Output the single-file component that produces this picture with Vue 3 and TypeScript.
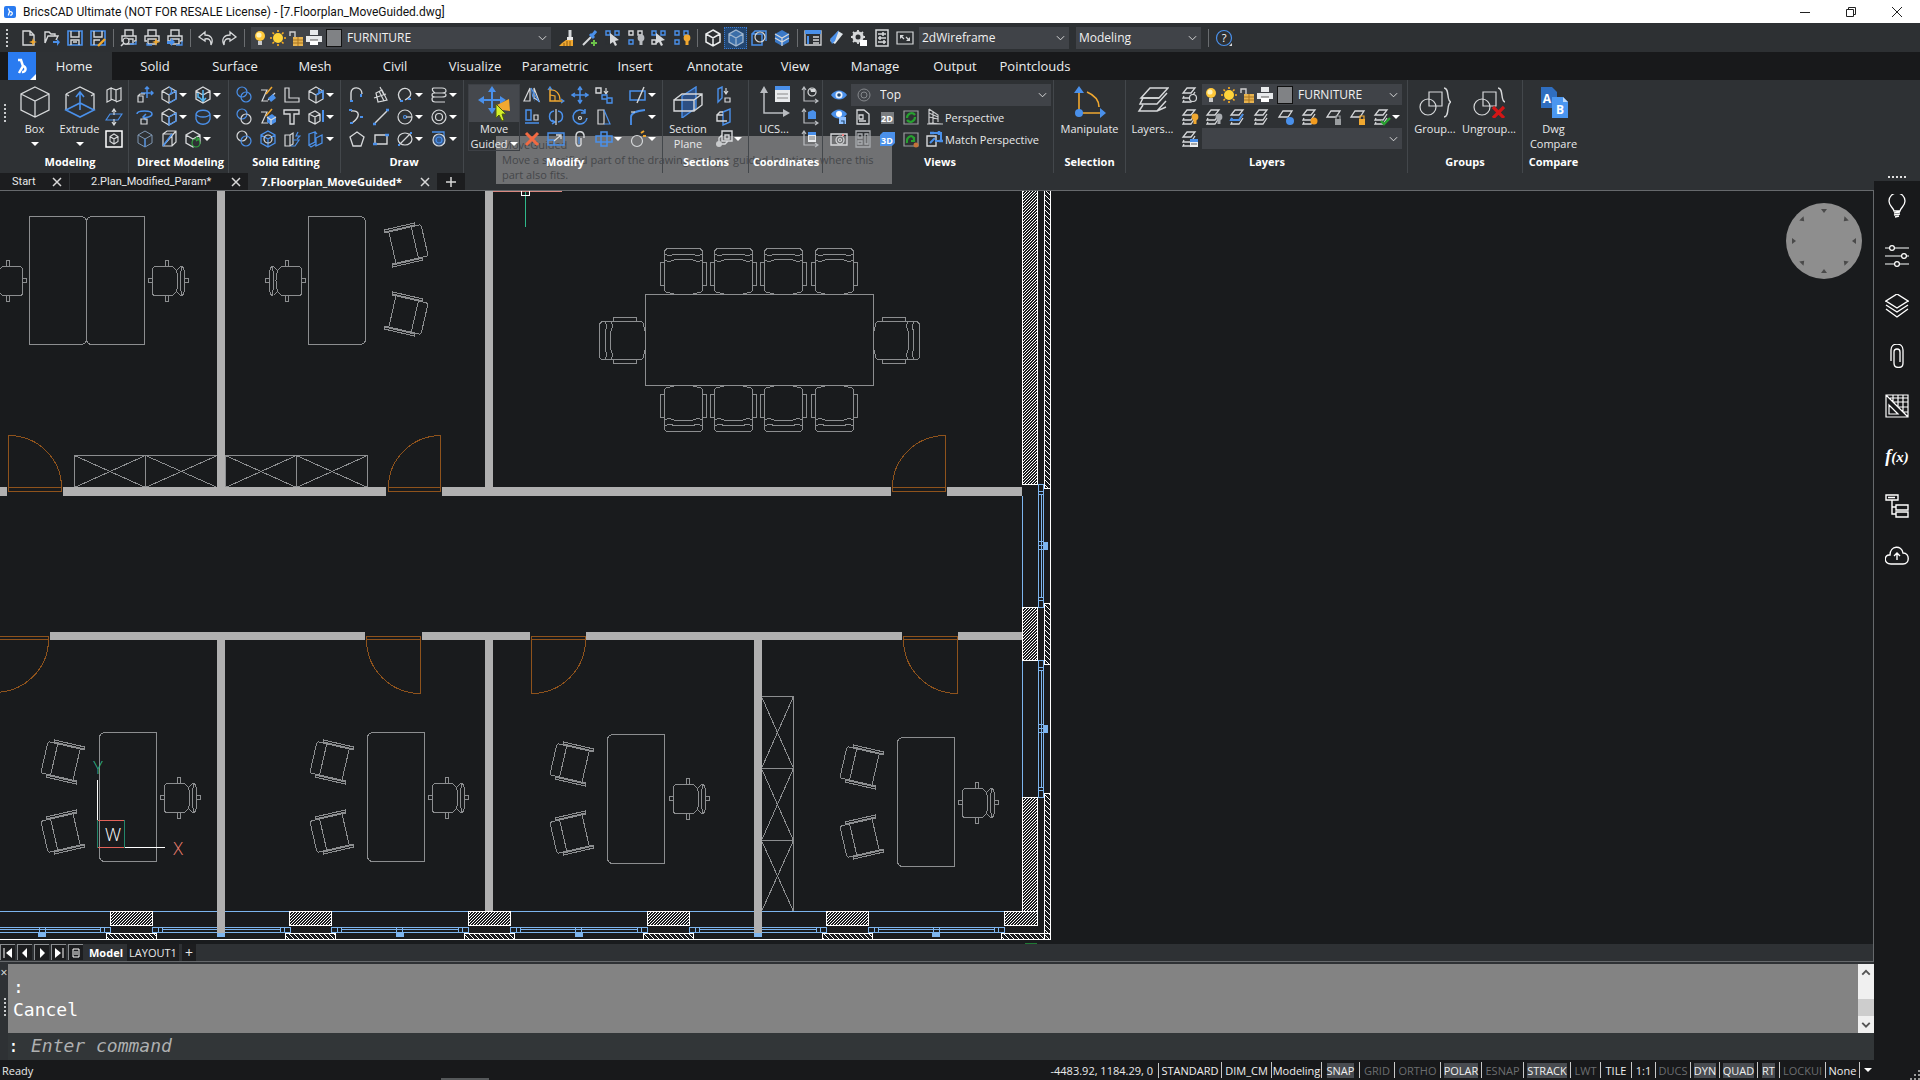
<script setup lang="ts">
import { ref } from 'vue'

interface Tool { icon: string; label: string; arrow?: boolean; wide?: boolean }

const W = '#d6d8da'
const B = '#4a90ea'
const O = '#f0a830'
const G = '#2fa03c'

const s = (d: string, c = W, w = 1.2) => `<path d="${d}" fill="none" stroke="${c}" stroke-width="${w}"/>`
const f = (d: string, c = W) => `<path d="${d}" fill="${c}"/>`
const o = (x: number, y: number, r: number, c = W, fill = 'none') =>
  `<circle cx="${x}" cy="${y}" r="${r}" fill="${fill}" stroke="${c}" stroke-width="1.2"/>`
const t = (x: number, y: number, size: number, text: string) =>
  `<text x="${x}" y="${y}" font-size="${size}" font-weight="700" font-family="Open Sans, sans-serif" fill="#fff" text-anchor="middle">${text}</text>`

const cube = 'M9 1L16 5V13L9 17L2 13V5ZM2 5L9 9L16 5M9 9V17'
const arrows4 = 'M9 2V16M2 9H16M7 4L9 1L11 4M7 14L9 17L11 14M4 7L1 9L4 11M14 7L17 9L14 11'
const stack = s('M6 2H14L10 7H2ZM3 10L2 12H10L14 6M3 14L2 16H10L14 10', W, 1.3)
const sheet = s('M6 3H15L11 9H2Z', W, 1.3)
const bulbAt = (c: string) => `<circle cx="14" cy="9" r="3.4" fill="${c}"/>` + f('M12.5 12H15.5V16H12.5Z', c)
const printer = s('M5 7V1H13V7M4 12H2V7H16V12H14M5 10H13V15H5Z', W, 1.4)
const axes = s('M3 2V15H16M1 4L3 1L5 4M14 13L17 15L14 17', '#b9bcc0', 1.2)
const squares = (c1: string, c2: string) => s('M2 2H6V6H2ZM11 2H15V6H11Z', c1, 1.4) + s('M2 11H6V15H2Z', c2, 1.4)
const pointer = f('M6 4L15 11L11 12L13 16L11 17L9 13L6 15Z')
const lockBody = (c: string) => f('M10 11H16V17H10Z', c) + s('M11 11V8H15V11', c)

const icons: Record<string, string> = {
  newFile: s('M3 2H10L14 6V16H3ZM10 2V6H14', W, 1.4) + f('M13 9L14 12L17 13L14 14L13 17L12 14L9 13L12 12Z', O),
  open: s('M2 14V3H6L8 5H12V7M2 14L5 7H15L13 11', W, 1.4) + f('M10 12H14V10L17 13L14 17V14H10Z', B),
  save: s('M2 2H16V16H2Z', B, 1.6) + s('M5 2V8H13V2M5 16V11H13V16M7 13H11', W, 1.4),
  saveAs: s('M2 2H16V16H2Z', B, 1.6) + s('M5 2V8H13V2M5 16V11H11', W, 1.4) + s('M9 17L16 10', O, 2.4),
  preview: printer + o(6, 12, 3, W, '#2d3033') + s('M4 14L1 17', W, 1.6) + s('M10 15H16V12', B, 1.3),
  print: printer + s('M4 14V16H9', B, 1.3) + f('M13 9L14 12L17 13L14 14L13 17L12 14L9 13L12 12Z', O),
  publish: printer + s('M10 16H16V12', B, 1.3) + f('M1 12H5V9L9 13L5 17V15H1Z', B),
  undo: s('M8 3L2 8L8 12V10C12 9 14 11 14 16C17 10 14 6 8 6Z', W, 1.3),
  redo: s('M10 3L16 8L10 12V10C6 9 4 11 4 16C1 10 4 6 10 6Z', W, 1.3),
  bulb: '<circle cx="9" cy="7" r="5" fill="#ffc83a"/><circle cx="8" cy="6" r="2.6" fill="#fff3b8"/>' + f('M7 12H11V16H7Z', '#c9c9c9'),
  sun: '<circle cx="9" cy="9" r="5" fill="#ffd43a"/>' + s('M9 1V3M9 15V17M1 9H3M15 9H17M3.500 3.500L5 5M13 13L14.500 14.500M3.500 14.500L5 13M13 5L14.500 3.500', '#ffb020', 1.6),
  unlock: f('M6 8H16V17H6Z', '#e8b450') + s('M8 8V3H3V7', '#cfcfcf', 1.4) + s('M6 11H16M6 14H16M11 8V17', '#a87420', 1),
  plot: f('M5 1H13V6H5ZM1 7H17V13H1Z', '#e8eaec') + f('M5 11H13V16H5Z', '#fff') + s('M5 11H13', '#555', 1),
  brush: s('M12 1V8', W, 3) + f('M9 8H15V11H9Z', '#e9e9e9') + f('M8 11H15V17H1L4 14Z', O) + s('M6 14V17M9 12V17M12 12V17', '#8a5a10', 1),
  dropper: s('M2 16L10 8', W, 2) + s('M9 5L13 9M10 8L15 2', B, 3) + s('M13 11V17M10 14H16', '#6cc24a', 2),
  selA: squares(B, '#2d3033') + pointer,
  selB: squares(W, B) + bulbAt('#b9bcc0'),
  selC: squares(B, W) + pointer,
  selD: squares(B, B) + bulbAt(O),
  cube: s(cube, '#eceeef', 1.5),
  cubeB: f('M9 1L16 5V13L9 17L2 13V5Z', '#3b6ea8') + s(cube, '#9fb6cf', 1.3),
  shapeO: s('M2 5H12V16H2ZM2 5L5 2H16V12', B, 1.5) + o(10, 8, 5),
  cubeC: f('M9 1L16 5V13L9 17L2 13V5Z', '#3a79c8') + s('M2 5L9 9L16 5M9 9V17M2 9L9 13L16 9', W, 1.2),
  props: s('M1 2H17V16H1Z', W, 1.3) + f('M1 1H17V5H1Z', B) + s('M4 7V15', B, 2) + s('M9 8H15M9 11H15M9 14H15', W, 1.4),
  eraser: f('M11 2L16 5L8 15L3 12Z', '#dfe5ea') + f('M3 10L12 1L8 12L5 15Z', B),
  gear: '<circle cx="8" cy="8" r="4.200" fill="none" stroke="#d6d8da" stroke-width="3"/>' + s('M8 1V15M1 8H15M3 3L13 13M3 13L13 3', W, 1.8) + '<circle cx="8" cy="8" r="2.500" fill="#2b2e31"/>' + f('M10 11H17V17H10Z', '#fff'),
  sliders: s('M3 1H15V17H3ZM5 5H13M5 9H13M5 13H13M10 3V7M7 7V11M11 11V15', W, 1.5),
  full: s('M1 3H17V15H1Z', W, 1.2) + f('M4 6H8L4 10ZM14 12H10L14 8Z') + s('M5 7L8 10M10 8L13 11'),
  help: o(9, 9, 7.5, B) + '<text x="9" y="13" font-size="11" font-family="Open Sans, sans-serif" fill="#fff" text-anchor="middle">?</text>' + f('M14 17H17V14Z'),
  polysolid: s('M2 4L6 2V14L2 16ZM6 2L11 4V15L6 13M11 4L16 2V14L11 16'),
  press: s('M1 12L5 6H17L13 12Z', B) + s('M9 2V7M9 11V16M7 4L9 1L11 4M7 14L9 17L11 14'),
  frame: s('M1 1H17V17H1Z', '#fff', 1.5) + s('M9 4L13 6.500V11.500L9 14L5 11.500V6.500ZM5 6.500L9 9L13 6.500M9 9V14', W, 1.1),
  dmMove: s('M11 1V12M5 7H17M9 3L11 1L13 3M15 5L17 7L15 9', B, 1.5) + s('M2 10H7V16H2ZM2 10L4 8H9'),
  dmEdge: s(cube) + s('M9 9L16 5V13L9 17M9 1C13 3 12 7 9 9', B, 1.3),
  dmFace: s(cube, W, 1.3) + s('M9 4V14M6 12L9 15L12 12M4 7V11L6 12', '#53b4ee', 1.6),
  dmRot: s('M1 6C1 2 16 2 16 6C16 9 10 10 7 9M10 6L7 9L10 12', B, 1.5) + s('M5 11H11V16H5Z'),
  dmFill: s(cube) + s('M9 9L16 5V13L9 17Z', B, 1.3),
  dmCyl: s('M2 6C4 1 14 1 16 6V11C14 18 4 18 2 11ZM2 6C4 10 14 10 16 6', B, 1.3),
  dmCube: s(cube, '#7f97b2', 1) + s('M9 9V17', B),
  dmSlice: s('M3 4L7 1H16V12L12 16H3ZM3 16L16 1M3 4H12V16') + s('M3 16L12 4', B, 1.5),
  dmSync: s(cube, W, 1.3) + o(12, 13, 4, G, '#2e3134') + s('M12 7L15 9L12 11', G, 1.5),
  seUnion: o(7, 6, 5, B) + o(11, 11, 5, B),
  seSub: o(7, 6, 5, B) + o(11, 11, 5),
  seInt: o(7, 6, 5) + o(11, 11, 5, B),
  seExt: s('M2 4H8L3 15H9M9 14L16 7') + f('M9 12L14 8L17 12L12 16Z', B) + s('M7 8L13 1', O, 1.5),
  seImp: s('M2 4H8L3 15H9') + f('M8 9L13 6L17 9V14L12 17L8 14Z', B) + s('M7 8L13 1', O, 1.5) + s('M8 9L12 12L17 9M12 12V17'),
  seSolid: s(cube, B, 1.3) + o(9, 9, 4),
  seL: s('M2 2H6V12H16V16H2Z'),
  seT: s('M1 2H16V6H11V16H7V6H1Z', W, 1.4),
  seCopy: s('M2 5H7V16H2ZM7 5L10 3V14L7 16') + s('M10 10H16L12 16H8M15 2L13 6H17L14 9', B),
  seA: s(cube) + s('M9 9L16 5V13M12 3V8', B, 1.6),
  seB: s('M2 6L8 3L13 6V13L8 16L2 13ZM2 6L8 9L13 6M8 9V16', W, 1.3) + s('M16 2V14', B, 2),
  seC: s('M2 4L8 2V12L2 15ZM9 8L15 5V13L9 16ZM8 2L10 4M2 15L4 17L9 14', B, 1.3),
  dPoly: s('M3 16V7C3 0 14 0 14 8', W, 1.4) + s('M2 15H5M13 8V11', B, 2),
  dArc: s('M3 3C13 2 12 9 4 15', W, 1.4) + s('M1 2H4M12 9H15M2 15H5', B, 2),
  dPent: s('M9 2L16 7L13 16H5L2 7Z', W, 1.3),
  dHatch: s('M4 7L10 4L15 14L6 16ZM2 12L14 8M7 5L12 15M8 1L12 9', W, 1.2),
  dLine: s('M3 15L15 3', W, 1.4) + s('M1 16H4M14 2H17', B, 2.5),
  dRect: s('M3 5H15V14H3Z', W, 1.4) + s('M1 14H5M13 5H17', B, 2.5),
  dArc2: s('M5 15C-2 6 8 -1 13 4C17 9 13 12 9 14', W, 1.3) + s('M4 15H7M12 13H15', B, 2),
  dCirc: o(9, 9, 7) + o(9, 9, 1.5, B) + s('M10 9H16', W),
  dEll: `<ellipse cx="9" cy="9" rx="7" ry="6" fill="none" stroke="${W}" stroke-width="1.2"/>` + s('M3 15L15 3', W) + s('M2 15H4M14 3H16', B, 2),
  dHelix: s('M3 2H12Q16 2 16 5Q16 7 12 7H5Q2 7 2 9Q2 11 5 11H13M5 7H12Q16 7 16 9Q16 11 12 11H5Q2 11 2 13Q2 16 5 16H15M3 2Q1 4 5 7', W, 1.2),
  dDonut: o(9, 9, 7) + o(9, 9, 3.5),
  dRegion: s('M2 2H14V14', B, 1.3) + o(9, 10, 6, W, '#35588a') + o(9, 10, 3, B),
  mMirror: s('M7 2L1 15H7ZM11 2L16 15L11 12Z') + f('M8 2L12 16L9 10Z', B) + s('M8 2L16 16', B, 1.4),
  mRot: s('M3 2V15H16', O, 1.5) + s('M3 4C9 3 13 8 13 14M3 9L8 10V15', O, 1.2) + s('M1 4L3 1L5 4M14 13L17 15L14 17', B, 1.3),
  mMove: s(arrows4, B, 1.5),
  mCopy: s('M1 2H6V7H1Z', W, 1.4) + s('M11 2V7M9 5L11 8L13 5') + s('M7 9H12V13H7ZM12 12H17V17H12Z', B, 1.4),
  mTrim: s('M1 5H16V14H1Z', B, 1.5) + s('M8 17L15 1', W, 1.4),
  mAlign: s('M3 2H8V12H3ZM2 15H16', B, 1.5) + s('M11 7H15V12H11Z'),
  mFlip: s('M7 3C1 4 1 13 7 14M11 3C17 4 17 13 11 14M5 12L8 14L5 16', B, 1.5) + s('M9 1V17'),
  mTurn: s('M14 4A7 7 0 1 0 16 10M14 1V5H10', B, 1.5) + o(9, 10, 1.5, W),
  mTaper: s('M3 2H9V16H3Z') + s('M9 2L15 16H9', B, 1.2),
  mFillet: s('M2 17V9C2 5 6 3 16 2', B, 1.8) + s('M2 4H6', W, 1.2),
  mErase: s('M3 3L15 15M15 3L3 15', '#f26a42', 3),
  mScale: s('M1 3H17V15H1ZM1 10H7V15', B, 1.4) + s('M7 11L13 6M9 5H14V9', W, 1.3),
  mOffset: s('M13 8V5C12 0 5 1 5 6V13C6 18 11 16 10 13V8', W, 1.4) + s('M8 14V7', B),
  mStretch: s('M6 2H12V6H17V12H12V16H6V12H1V6H6ZM6 6H12V12H6Z', B, 1.5),
  mExplode: o(8, 11, 5.5) + s('M12 3L15 1M14 6L17 6', O, 2),
  secA: s('M3 3L7 1V12L3 16Z', B, 1.4) + s('M11 2V7M9 5L11 8L13 5') + s('M10 12H15V16H10Z'),
  secB: s('M8 4L15 1V14L8 17Z', B, 1.4) + s('M8 7H2V13H12M2 7L5 4H8', W, 1.4),
  secC: s('M7 1H17V11H7ZM10 5H14V9H10ZM7 5L4 8V14H10L13 11', W, 1.4) + '<circle cx="4" cy="14" r="3" fill="#c8cacc"/>',
  csA: axes + o(11, 6, 4) + f('M9 3H14V6H10Z'),
  csB: axes + f('M7 4L12 2L15 4V11H7Z', B),
  csC: axes + f('M7 3H15V12H7Z', '#e8eaec') + f('M7 2H15V5H7Z', B) + s('M8 7H14M8 9H14', '#777', 1),
  eye: f('M1 9C5 3 13 3 17 9C13 15 5 15 1 9Z', B) + '<circle cx="9" cy="9" r="3.500" fill="#eaf3ff"/><circle cx="9" cy="9" r="1.800" fill="#24486f"/>',
  eyeSave: f('M1 6C5 0 13 0 17 6C13 12 5 12 1 6Z', B) + '<circle cx="9" cy="6" r="3" fill="#fff"/>' + f('M9 9H16V16H9Z', '#8fc0ff') + s('M11 13H14V16', '#24486f'),
  camera: s('M1 4H17V15H1Z', W, 1.4) + o(10, 10, 4) + o(10, 10, 1.5) + s('M13 4V6', '#e88', 2),
  page: s('M3 2H10L15 6V16H3ZM5 7H9V11H5ZM5 13H12', W, 1.3),
  vports: s('M2 1H16V17H2ZM4 4H8V8H4ZM11 4H14V14H11ZM4 11H8V14H4Z', '#a9acb0', 1.3),
  v2d: f('M3 4H16V16H3Z', '#7a7d80') + t(9, 14, 9, '2D'),
  v3d: f('M2 5L5 2H17V13L14 16H2Z', '#4a90ea') + t(9, 14, 9, '3D'),
  regen: s('M2 3H16V16H2Z', '#9a9da0') + s('M13 7C10 3 5 6 5 10M5 12C8 16 13 13 13 9', '#27a02f', 2.2),
  redraw: s('M2 3H16V16H2Z', '#9a9da0') + s('M5 13C4 6 11 4 12 9M12 7V11H9', '#27a02f', 2.2) + '<circle cx="14" cy="15" r="2.500" fill="#c4733a"/>',
  persp: s('M3 1V15L16 16M3 1L12 7V14M3 5L12 9M3 9L12 11M7 4V15M1 16H17', '#c8cacc', 1.2),
  match: s('M1 6H10V16H1Z', W, 1.4) + s('M6 3H15V11H9', B, 2) + s('M4 13L9 8', B, 2) + s('M4 3H8M13 1V5M13 11H17', B, 2.5),
  layFind: stack + o(12, 12, 3.5, W, '#2e3134'),
  layOn: stack + bulbAt(O),
  layOff: stack + bulbAt('#a9acb0'),
  layCur: stack + s('M3 10L2 12H10L14 6', B, 2),
  lay: stack,
  layFrz: sheet + '<circle cx="13" cy="13" r="4" fill="#4a90ea"/>',
  layThaw: stack + '<circle cx="13" cy="13" r="3.500" fill="#f39c1f"/>',
  layLock: sheet + lockBody('#9a9da0'),
  layUnlock: sheet + lockBody(O),
  layOk: stack + s('M8 13L11 16L17 10', '#27a02f', 2.4),
  layList: stack + f('M9 9H17V17H9Z', '#eceeef') + f('M9 9H17V12H9Z', B) + s('M10 14H16', '#777'),
}

const big: Record<string, string> = {
  box: s('M16 1L30 8V24L16 31L2 24V8ZM2 8L16 15L30 8M16 15V31', W, 1.3),
  extrude: s('M2 8L16 1L30 8V24M2 8V24M2 8L5 10M30 8L27 10', W, 1.3) + s('M2 24L16 31L30 24L16 17ZM16 24V7M12 11L16 6L20 11', B, 1.6),
  move: s('M14 4V24M4 14H24', B, 2) + f('M10 6L14 0L18 6ZM10 22L14 28L18 22ZM6 10L0 14L6 18ZM22 10L28 14L22 18Z', B) + f('M31 13L32 25L24 24L19 19Z', O),
  section: f('M10 10L24 1V22L10 32Z', '#2d4f83') + s('M10 10L24 1V22L10 32Z', B, 1.4) + s('M2 14H22V25H2ZM2 14L10 8H30V19L22 25M22 14L30 8', W, 1.4),
  ucs: s('M6 3V27H28', '#b9bcc0', 1.5) + f('M2 7L6 0L10 7ZM25 23L32 27L25 31Z', '#b9bcc0') + f('M17 0H32V16H17Z', '#e8eaec') + f('M17 0H32V4H17Z', B) + s('M19 8H30M19 12H30', '#888', 1.2),
  manip: s('M5 7V27H27', O, 1.6) + s('M13 6C20 9 25 14 25 21', O, 1.6) + f('M0 7L5 0L10 7ZM26 22L32 27L26 32Z', B) + '<circle cx="5" cy="27" r="4" fill="#4a90ea"/>',
  layers: s('M13 2H31L22 12H4ZM6 12L3 18H20L30 7M6 19L2 25H20L29 15M20 25L29 21', W, 1.5) + s('M4 12H22', W, 1.5),
  group: s('M10 6H23V20H10Z') + o(9, 21, 8) + s('M25 2C31 2 27 15 32 16C27 17 31 31 25 31', W, 1.4),
  ungroup: s('M10 6H23V20H10Z') + o(9, 21, 8) + s('M25 2C31 2 27 15 32 16', W, 1.4) + s('M20 21L31 32M31 21L20 32', '#d31616', 3.2),
  compare: f('M3 1H14L19 6V22H3Z', '#2f6ec0') + t(9, 17, 12, 'A') + f('M14 11H25L30 16V32H14Z', '#4a96f0') + f('M25 11V16H30Z', '#bcd8fa') + t(22, 28, 12, 'B'),
}

/* "+" marks a tool with a drop-down arrow, "-" one that only keeps the arrow's room */
const row = (list: string): Tool[] =>
  list.split(' ').map((n) => {
    const name = n.replace(/[+-]/, '')
    return { icon: name, label: name, arrow: n.endsWith('+'), wide: /[+-]$/.test(n) }
  })

const quickA = ['newFile', 'open', 'save', 'saveAs', '|', 'preview', 'print', 'publish', '|', 'undo', 'redo', '|']
const quickB = ['brush', 'dropper', 'selA', 'selB', 'selC', 'selD', '|', 'cube', 'cubeB', 'shapeO', 'cubeC', '|', 'props', 'eraser', 'gear', 'sliders', 'full']
const layerState = ['bulb', 'sun', 'unlock', 'plot']

const ribbonTabs = ['Home', 'Solid', 'Surface', 'Mesh', 'Civil', 'Visualize', 'Parametric', 'Insert', 'Annotate', 'View', 'Manage', 'Output', 'Pointclouds']
const activeTab = ref('Home')

interface Big { icon: string; lines: string[]; w: number; arrow?: 'below' | 'inline'; hot?: boolean }
interface Panel { title: string; w: number; pad: number; bigs: Big[]; rows: Tool[][] }
const panels: Panel[] = [
  { title: 'Modeling', w: 129, pad: 12, bigs: [{ icon: 'box', lines: ['Box'], w: 45, arrow: 'below' }, { icon: 'extrude', lines: ['Extrude'], w: 45, arrow: 'below' }], rows: [row('polysolid'), row('press'), row('frame')] },
  { title: 'Direct Modeling', w: 100, pad: 4, bigs: [], rows: [row('dmMove dmEdge+ dmFace+'), row('dmRot dmFill+ dmCyl'), row('dmCube dmSlice dmSync+')] },
  { title: 'Solid Editing', w: 112, pad: 3, bigs: [], rows: [row('seUnion seExt seL seA+'), row('seSub seImp seT seB+'), row('seInt seSolid seCopy seC+')] },
  { title: 'Draw', w: 123, pad: 4, bigs: [], rows: [row('dPoly dHatch dArc2+ dHelix+'), row('dArc dLine dCirc+ dDonut+'), row('dPent dRect dEll+ dRegion+')] },
  { title: 'Modify', w: 199, pad: 4, bigs: [{ icon: 'move', lines: ['Move', 'Guided'], w: 52, arrow: 'inline', hot: true }], rows: [row('mMirror mRot mMove mCopy- mTrim+'), row('mAlign mFlip mTurn mTaper- mFillet+'), row('mErase mScale mOffset mStretch+ mExplode+')] },
  { title: 'Sections', w: 86, pad: 1, bigs: [{ icon: 'section', lines: ['Section', 'Plane'], w: 48 }], rows: [row('secA'), row('secB'), row('secC+')] },
  { title: 'Coordinates', w: 74, pad: 1, bigs: [{ icon: 'ucs', lines: ['UCS...'], w: 48 }], rows: [row('csA'), row('csB'), row('csC')] },
]
panels[1].rows[1] = row('dmRot dmFill+ dmCyl+')

const viewRows: { tools: Tool[]; text: string; icon: string }[] = [
  { tools: row('eyeSave page v2d regen'), text: 'Perspective', icon: 'persp' },
  { tools: row('camera vports v3d redraw'), text: 'Match Perspective', icon: 'match' },
]
const layerTools = ['layOn', 'layOff', 'layCur', 'lay', 'layFrz', 'layThaw', 'layLock', 'layUnlock', 'layOk']
const groupBigs: Big[] = [{ icon: 'group', lines: ['Group...'], w: 54 }, { icon: 'ungroup', lines: ['Ungroup...'], w: 54 }]

const docs = [
  { name: 'Start', cls: 'd1' },
  { name: '2.Plan_Modified_Param*', cls: 'd2' },
  { name: '7.Floorplan_MoveGuided*', cls: 'd3' },
]

const status = [
  { t: 'STANDARD', w: 63, m: '' }, { t: 'DIM_CM', w: 50, m: '' }, { t: 'Modeling', w: 50, m: '' },
  { t: 'SNAP', w: 38, m: 'on' }, { t: 'GRID', w: 35, m: 'off' }, { t: 'ORTHO', w: 46, m: 'off' },
  { t: 'POLAR', w: 41, m: 'on' }, { t: 'ESNAP', w: 42, m: 'off' }, { t: 'STRACK', w: 47, m: 'on' },
  { t: 'LWT', w: 30, m: 'off' }, { t: 'TILE', w: 31, m: '' }, { t: '1:1', w: 24, m: '' },
  { t: 'DUCS', w: 35, m: 'off' }, { t: 'DYN', w: 29, m: 'on' }, { t: 'QUAD', w: 38, m: 'on' },
  { t: 'RT', w: 22, m: 'on' }, { t: 'LOCKUI', w: 46, m: 'off' }, { t: 'None', w: 34, m: '' },
]

const side: { name: string; art: string }[] = [
  { name: 'Tips', art: s('M9 17C8 13 4 12 4 7A8 8 0 0 1 20 7C20 12 16 13 15 17ZM9 19L15 18M9 21L15 20M10 23L14 22', '#fff', 1.3) },
  { name: 'Properties', art: s('M0 4H5M9 4H24M0 12H17M21 12H24M0 20H10M14 20H24', '#b0b2b4', 1.6) + o(7, 4, 2.4, '#fff') + o(19, 12, 2.4, '#fff') + o(12, 20, 2.4, '#fff') },
  { name: 'Layers', art: s('M12 0L23 7L12 14L1 7ZM1 11L12 18L23 11M1 15L12 23L23 15M1 7V8M23 7V8', '#fff', 1.4) },
  { name: 'Attachments', art: s('M6 17V6C6 -2 18 -2 18 6V19C18 25 9 25 9 19V8C9 4 15 4 15 8V18', '#fff', 1.3) },
  { name: 'Hatches', art: s('M1 1H23V23H1ZM1 1L23 23M4 11V20H13ZM8 1V8M13 1V13M18 1V18M8 8H23M13 13H23M18 18H23M5 4H23', '#fff', 1.2) },
  { name: 'Parameters', art: '' },
  { name: 'Structure', art: s('M1 1H13V6H1ZM11 11H23V16H11ZM11 18H23V23H11ZM7 6V20H11M7 13H11M3 3.500H10', '#fff', 1.4) },
  { name: 'Cloud', art: s('M6 20C-2 20 -1 10 5 11C5 1 17 1 18 9C25 9 25 20 18 20ZM12 16V9M9 12L12 9L15 12', '#fff', 1.4) },
]

/* floor plan, in drawing coordinates */
const walls = [
  [217, 191, 8, 296], [485, 191, 8, 296], [0, 487, 7, 9], [63, 487, 323, 9], [442, 487, 449, 9], [947, 487, 75, 9],
  [50, 632, 315, 8], [422, 632, 108, 8], [586, 632, 316, 8], [958, 632, 64, 8],
  [217, 640, 8, 293], [485, 640, 8, 271], [754, 640, 8, 293],
]
const deskPaths = [
  'M29.5 216.5H80.5Q86.500 216.500 86.5 222.5V338.5Q86.500 344.500 80.5 344.5H29.5Z',
  'M144.5 216.5H92.5Q86.500 216.500 86.5 222.5V338.5Q86.500 344.500 92.5 344.5H144.5Z',
  'M308.5 216.5H359.5Q365.500 216.500 365.5 222.5V338.5Q365.500 344.500 359.5 344.5H308.5Z',
  'M645.5 294.5H873.5V385.5H645.5Z',
]
const lowerDesks = [[99, 732], [367, 732], [607, 734], [897, 737]]
const swivels = [[168, 280, 1], [6, 280, -1], [285, 280, -1], [180, 797, 1], [448, 797, 1], [689, 798, 1], [978, 802, 1]]
const guests = [
  [408, 244, 1, 1], [408, 315, 1, -1],
  [61, 761, -1, 1], [61, 833, -1, -1], [330, 761, -1, 1], [330, 833, -1, -1],
  [570, 763, -1, 1], [570, 834, -1, -1], [860, 766, -1, 1], [860, 838, -1, -1],
]
const meeting = [
  ...[683, 733, 783, 834].flatMap((x) => [[x, 294, 0], [x, 385, 180]]),
  [645, 340, -90], [873, 340, 90],
]
const cabinets = [[74, 455, 71, 32], [145, 455, 72, 32], [225, 455, 71, 32], [296, 455, 71, 32], [761, 696, 32, 72], [761, 768, 32, 72], [761, 840, 32, 71]]
const doors = [
  'M8.5 487.5V435.5A53 52 0 0 1 61.5 487.500M8.5 487.5H61.5V491.5H8.5Z',
  'M440.5 487.5V435.5A53 52 0 0 0 388.5 487.500M388.5 487.5H440.5V491.5H388.5Z',
  'M945.5 487.5V435.5A53 52 0 0 0 892.5 487.500M892.5 487.5H945.5V491.5H892.5Z',
  'M-5 636.5H48.5V639.5H-5M48.5 639.5A54 53 0 0 1 -5 692.500',
  'M366.5 636.5H420.5V639.5H366.5ZM420.5 639.5V693.5A54 54 0 0 1 366.5 639.500',
  'M531.5 636.5H585.5V639.5H531.5ZM531.5 639.5V693.5A54 54 0 0 0 585.5 639.500',
  'M903.5 636.5H957.5V639.5H903.5ZM957.5 639.5V693.5A54 54 0 0 1 903.5 639.500',
]
const piers = [[1022, 180, 15, 304], [1022, 607, 15, 53], [1022, 797, 15, 114], [1004, 911, 33, 14], [110, 911, 42, 14], [289, 911, 42, 14], [468, 911, 42, 14], [647, 911, 42, 14], [826, 911, 42, 14]]
const cladding = [[1044, 180, 6, 308], [1044, 603, 6, 61], [1044, 793, 6, 146], [106, 933, 50, 6], [285, 933, 50, 6], [464, 933, 50, 6], [643, 933, 50, 6], [822, 933, 50, 6], [1001, 933, 49, 6]]
const windowsH = [[-26, 110], [152, 290], [331, 468], [510, 647], [689, 826], [868, 1004]]
const windowsV = [[484, 607], [660, 797]]
const wheelMarks = [0, 45, 90, 135, 180, 225, 270, 315]
</script>

<template>
  <div class="app">
    <header class="title">
      <span class="logo small"><svg viewBox="0 0 28 28"><path d="M10 6L13 13L10 22M14 21A4 4 0 1 0 13 14" fill="none" stroke="#fff" stroke-width="3" /></svg></span>
      <h1>BricsCAD Ultimate (NOT FOR RESALE License) - [7.Floorplan_MoveGuided.dwg]</h1>
      <button aria-label="Minimize"><svg viewBox="0 0 12 12"><path d="M1 6.500H11" /></svg></button>
      <button aria-label="Restore"><svg viewBox="0 0 12 12"><path d="M1.500 3.500H8.500V10.500H1.500ZM3.500 3.500V1.500H10.500V8.500H8.500" /></svg></button>
      <button aria-label="Close"><svg viewBox="0 0 12 12"><path d="M1 1L11 11M11 1L1 11" /></svg></button>
    </header>

    <div class="quick">
      <span class="grip"></span>
      <template v-for="(n, i) in quickA" :key="i">
        <i v-if="n === '|'" class="sep"></i>
        <button v-else class="tool" :aria-label="n"><svg class="ic" viewBox="0 0 18 18" v-html="icons[n]"></svg></button>
      </template>
      <div class="drop quick-layer">
        <svg v-for="n in layerState" :key="n" class="ic" viewBox="0 0 18 18" v-html="icons[n]"></svg>
        <span class="swatch"></span>
        <select aria-label="Current layer"><option>FURNITURE</option></select>
        <svg class="chev" viewBox="0 0 10 6"><path d="M1 1L5 5L9 1" /></svg>
      </div>
      <div class="quick-set">
        <template v-for="(n, i) in quickB" :key="i">
          <i v-if="n === '|'" class="sep"></i>
          <button v-else class="tool" :class="{ active: n === 'cubeB' }" :aria-label="n"><svg class="ic" viewBox="0 0 18 18" v-html="icons[n]"></svg></button>
        </template>
      </div>
      <div class="drop style-drop">
        <select aria-label="Visual style"><option>2dWireframe</option></select>
        <svg class="chev" viewBox="0 0 10 6"><path d="M1 1L5 5L9 1" /></svg>
      </div>
      <div class="drop space-drop">
        <select aria-label="Workspace"><option>Modeling</option></select>
        <svg class="chev" viewBox="0 0 10 6"><path d="M1 1L5 5L9 1" /></svg>
      </div>
      <i class="sep"></i>
      <button class="tool" aria-label="Help"><svg class="ic" viewBox="0 0 18 18" v-html="icons.help"></svg></button>
    </div>

    <nav class="tabs">
      <button class="logo" aria-label="Application menu"><svg viewBox="0 0 28 28"><path d="M10 8H13L15 14L11 21M14 20A3 3 0 1 0 15 14" fill="none" stroke="#fff" stroke-width="2.500" /><path d="M28 22V28H22Z" fill="#fff" /></svg></button>
      <button v-for="n in ribbonTabs" :key="n" class="tab" :class="{ current: n === activeTab }" @click="activeTab = n">{{ n }}</button>
    </nav>

    <section class="ribbon">
      <div class="tooltip" role="tooltip"><p>MoveGuided</p><p>Move a specified part of the drawing and get guided locations where this</p><p>part also fits.</p></div>
      <span class="grip"></span>
      <div v-for="p in panels" :key="p.title" class="panel" :style="{ width: p.w + 'px', paddingLeft: p.pad + 'px' }">
        <div class="body">
          <button v-for="b in p.bigs" :key="b.icon" class="big" :class="{ hot: b.hot }" :style="{ width: b.w + 'px' }">
            <svg viewBox="0 0 32 32" v-html="big[b.icon]"></svg>
            <span v-for="l in b.lines" :key="l">{{ l }}<i v-if="b.arrow === 'inline' && l === b.lines[b.lines.length - 1]" class="tri"></i></span>
            <span v-if="b.arrow === 'below'"><i class="tri"></i></span>
          </button>
          <div class="rows">
            <div v-for="(r, i) in p.rows" :key="i" class="row">
              <button v-for="x in r" :key="x.icon" class="cell" :class="{ wide: x.wide }" :aria-label="x.label">
                <svg class="ic" viewBox="0 0 18 18" v-html="icons[x.icon]"></svg><i v-if="x.arrow" class="tri"></i>
              </button>
            </div>
          </div>
        </div>
        <h2>{{ p.title }}</h2>
      </div>

      <div class="panel views">
        <div class="rows">
          <div class="row">
            <button class="cell" aria-label="View"><svg class="ic" viewBox="0 0 18 18" v-html="icons.eye"></svg></button>
            <div class="drop">
              <svg class="ic" viewBox="0 0 18 18"><circle cx="9" cy="9" r="6" fill="none" stroke="#85888c" /><circle cx="9" cy="9" r="3" fill="none" stroke="#85888c" /></svg>
              <select class="top-view" aria-label="Named view"><option>Top</option></select>
              <svg class="chev" viewBox="0 0 10 6"><path d="M1 1L5 5L9 1" /></svg>
            </div>
          </div>
          <div v-for="r in viewRows" :key="r.text" class="row">
            <button v-for="x in r.tools" :key="x.icon" class="cell" :aria-label="x.label"><svg class="ic" viewBox="0 0 18 18" v-html="icons[x.icon]"></svg></button>
            <button class="cell texted"><svg class="ic" viewBox="0 0 18 18" v-html="icons[r.icon]"></svg>{{ r.text }}</button>
          </div>
        </div>
        <h2>Views</h2>
      </div>

      <div class="panel selection">
        <div class="body mid">
          <button class="big"><svg viewBox="0 0 32 32" v-html="big.manip"></svg><span>Manipulate</span></button>
        </div>
        <h2>Selection</h2>
      </div>

      <div class="panel layers">
        <div class="body">
          <button class="big"><svg viewBox="0 0 32 32" v-html="big.layers"></svg><span>Layers...</span></button>
          <div class="rows">
            <div class="row">
              <button class="cell" aria-label="Find layer"><svg class="ic" viewBox="0 0 18 18" v-html="icons.layFind"></svg></button>
              <div class="drop">
                <svg v-for="n in layerState" :key="n" class="ic" viewBox="0 0 18 18" v-html="icons[n]"></svg>
                <span class="swatch"></span>
                <select aria-label="Layer"><option>FURNITURE</option></select>
                <svg class="chev" viewBox="0 0 10 6"><path d="M1 1L5 5L9 1" /></svg>
              </div>
            </div>
            <div class="row">
              <button v-for="n in layerTools" :key="n" class="cell" :class="{ wide: n === 'layOk' }" :aria-label="n">
                <svg class="ic" viewBox="0 0 18 18" v-html="icons[n]"></svg><i v-if="n === 'layOk'" class="tri"></i>
              </button>
            </div>
            <div class="row">
              <button class="cell" aria-label="Layer states"><svg class="ic" viewBox="0 0 18 18" v-html="icons.layList"></svg></button>
              <div class="drop">
                <select aria-label="Layer state"><option></option></select>
                <svg class="chev" viewBox="0 0 10 6"><path d="M1 1L5 5L9 1" /></svg>
              </div>
            </div>
          </div>
        </div>
        <h2>Layers</h2>
      </div>

      <div class="panel groups">
        <div class="body">
          <button v-for="b in groupBigs" :key="b.icon" class="big" :style="{ width: b.w + 'px' }"><svg viewBox="0 0 32 32" v-html="big[b.icon]"></svg><span>{{ b.lines[0] }}</span></button>
        </div>
        <h2>Groups</h2>
      </div>

      <div class="panel compare">
        <div class="body mid">
          <button class="big"><svg viewBox="0 0 32 32" v-html="big.compare"></svg><span>Dwg</span><span>Compare</span></button>
        </div>
        <h2>Compare</h2>
      </div>

      <svg class="cursor" viewBox="0 0 12 19"><path d="M1 1V15L4 12L7 18L9 17L7 11H11Z" fill="#d4f02a" stroke="#4d5a10" /></svg>
    </section>

    <div class="work">
      <div class="left">
        <div class="docs">
          <div v-for="d in docs" :key="d.name" class="doc" :class="d.cls">
            <button>{{ d.name }}</button>
            <button class="x" :aria-label="'Close ' + d.name"><svg viewBox="0 0 10 10"><path d="M1 1L9 9M9 1L1 9" /></svg></button>
          </div>
          <button class="plus" aria-label="New drawing"><svg viewBox="0 0 10 10"><path d="M5 0V10M0 5H10" /></svg></button>
        </div>

        <main class="canvas">
          <svg class="plan">
            <defs>
              <pattern id="hatchA" width="3" height="3" patternUnits="userSpaceOnUse"><path d="M0 3L3 0" stroke="#fff" fill="none" /></pattern>
              <pattern id="hatchB" width="5" height="5" patternUnits="userSpaceOnUse"><path d="M0 0L5 5" stroke="#fff" stroke-width="1" fill="none" /></pattern>
              <g id="swivel">
                <path d="M-13 -14H4L8 -10Q11 0 8 11L4 15H-13Q-16 15 -16 12V-11Q-16 -14 -13 -14ZM-3 -14V-20H0V-14M-3 15V21H0V15M-16 -2H-20V2H-16M8 -10L12 -14Q15 -15 16 -8V9Q15 16 12 15L8 11M13 -14Q11 0 13 15M16 -2H20V2H16" />
              </g>
              <g id="guest">
                <path d="M-20 -19H11V-16H-20ZM-20 19H11V16H-20ZM-16 -16V16M7 -16V16M7 -16H15Q17 -16 17 -14V14Q17 16 15 16H7M-20 -17H11M-20 17H11" />
              </g>
              <g id="meet">
                <path d="M-19 -34V-5Q-19 -2 -15 -2L-8 0H8L15 -2Q19 -2 19 -5V-42Q19 -46 15 -46H-15Q-19 -46 -19 -42V-34L-14 -33L-8 -35H8L14 -33L19 -34M-19 -40L-14 -39L-8 -40H8L14 -39L19 -40M-19 -32H-23V-9H-19M19 -32H23V-9H19" />
              </g>
            </defs>
            <g transform="translate(0 -191)" shape-rendering="crispEdges" fill="none">
              <g stroke="#8c8e90">
                <path v-for="d in deskPaths" :key="d" :d="d" />
                <path v-for="d in lowerDesks" :key="d[0]" :d="`M${d[0] + 57}.5 ${d[1]}.5V${d[1] + 129}.5H${d[0] + 6}.5Q${d[0]}.5 ${d[1] + 129}.5 ${d[0]}.5 ${d[1] + 123}.5V${d[1] + 6}.5Q${d[0]}.5 ${d[1]}.5 ${d[0] + 6}.5 ${d[1]}.5Z`" />
                <use v-for="c in swivels" :key="'s' + c" href="#swivel" :transform="`translate(${c[0]}.5 ${c[1]}.5) scale(${c[2]} 1)`" />
                <use v-for="c in guests" :key="'g' + c" href="#guest" :transform="`translate(${c[0]} ${c[1]}) scale(${c[2]} ${c[3]}) rotate(-13)`" />
                <use v-for="c in meeting" :key="'m' + c" href="#meet" :transform="`translate(${c[0]}.5 ${c[1]}.5) rotate(${c[2]})`" />
                <path v-for="c in cabinets" :key="'c' + c" :d="`M${c[0]}.5 ${c[1]}.5h${c[2]}v${c[3]}h${-c[2]}zl${c[2]} ${c[3]}m0 ${-c[3]}l${-c[2]} ${c[3]}`" />
              </g>
              <path v-for="d in doors" :key="d" :d="d" stroke="#8f531c" />
              <g stroke="#7db5ee">
                <path d="M0 911.500H1004M1022.500 496V607M1022.500 660V797" />
                <template v-for="w in windowsH" :key="w[0]">
                  <path :d="`M${w[0]} 927.5H${w[1]}V932.5H${w[0]}ZM${w[0] + 10} 929.5H${w[1] - 10}M${w[0] + 6} 927V933M${w[0] + 10} 927V933M${w[1] - 6} 927V933M${w[1] - 10} 927V933M${(w[0] + w[1]) / 2 - 3} 927V933M${(w[0] + w[1]) / 2 + 3} 927V933`" />
                  <path :d="`M${(w[0] + w[1]) / 2 - 4} 932h8v5h-8z`" fill="#7db5ee" stroke="none" />
                </template>
                <template v-for="w in windowsV" :key="w[0]">
                  <path :d="`M1038.5 ${w[0]}V${w[1]}H1043.5V${w[0]}ZM1041.5 ${w[0] + 10}V${w[1] - 10}M1038 ${w[0] + 7}H1044M1038 ${w[0] + 10}H1044M1038 ${w[1] - 7}H1044M1038 ${w[1] - 10}H1044M1038 ${(w[0] + w[1]) / 2 - 4}h6M1038 ${(w[0] + w[1]) / 2}h6M1038 ${(w[0] + w[1]) / 2 + 4}h6`" />
                  <path :d="`M1043 ${(w[0] + w[1]) / 2 - 4}h5v8h-5z`" fill="#7db5ee" stroke="none" />
                </template>
              </g>
              <rect v-for="w in walls" :key="'w' + w" :x="w[0]" :y="w[1]" :width="w[2]" :height="w[3]" fill="#b0b0b0" />
              <g stroke="#fff">
                <rect v-for="w in piers" :key="'p' + w" :x="w[0] + 0.5" :y="w[1] + 0.5" :width="w[2]" :height="w[3]" fill="url(#hatchA)" />
                <rect v-for="w in cladding" :key="'k' + w" :x="w[0] + 0.5" :y="w[1] + 0.5" :width="w[2]" :height="w[3]" fill="url(#hatchB)" />
                <path d="M1050.500 180V939.500H0" />
              </g>
              <path d="M493 191.500H562" stroke="#d98880" />
              <path d="M525.500 192V227" stroke="#2fb88a" />
              <path d="M521.500 191V195.500H529.500V191" stroke="#fff" />
              <path d="M97.500 780V847.500H165" stroke="#fff" />
              <path d="M97 820.500H125M97 847.500H125" stroke="#e2635a" />
              <path d="M97.500 820V848M124.500 820V848" stroke="#23866a" />
              <path d="M1025 943.500H1037" stroke="#1f7a34" />
            </g>
            <g transform="translate(0 -191)" class="ucs-text" text-anchor="middle">
              <text x="113" y="841" fill="#fff">W</text>
              <text x="98" y="774" fill="#2fb88a">Y</text>
              <text x="178" y="855" fill="#f08070">X</text>
            </g>
          </svg>
          <svg class="wheel" viewBox="-39 -39 78 78">
            <circle r="38" fill="#8e8e8e" />
            <path v-for="a in wheelMarks" :key="a" d="M-3 -32H3L0 -28Z" fill="#4a4a4a" :transform="`rotate(${a})`" />
          </svg>
        </main>

        <div class="layouts">
          <button class="nav" aria-label="First"><svg viewBox="0 0 12 12"><path d="M2 1V11" /><path class="fill" d="M10 1V11L4 6Z" /></svg></button>
          <button class="nav" aria-label="Previous"><svg viewBox="0 0 12 12"><path class="fill" d="M8 1V11L3 6Z" /></svg></button>
          <button class="nav" aria-label="Next"><svg viewBox="0 0 12 12"><path class="fill" d="M4 1V11L9 6Z" /></svg></button>
          <button class="nav" aria-label="Last"><svg viewBox="0 0 12 12"><path d="M10 1V11" /><path class="fill" d="M2 1V11L8 6Z" /></svg></button>
          <button class="nav" aria-label="Layout list"><svg viewBox="0 0 12 12"><path d="M3 2H9V10H3ZM4 5H8M4 7H8" /></svg></button>
          <button class="model">Model</button>
          <button class="layout">LAYOUT1</button>
          <button class="add">+</button>
        </div>
      </div>

      <aside class="side">
        <span class="dots"></span>
        <div class="side-body">
          <button v-for="x in side" :key="x.name" :aria-label="x.name">
            <svg v-if="x.art" viewBox="0 0 24 24" v-html="x.art"></svg>
            <em v-else><b>f</b>(x)</em>
          </button>
        </div>
      </aside>
    </div>

    <div class="command">
      <div class="cmd-left"><button aria-label="Close command line">×</button><span class="grip"></span></div>
      <div class="cmd-main">
        <div class="history">
          <pre>:
Cancel</pre>
          <div class="bar">
            <svg viewBox="0 0 10 8"><path d="M1 6L5 2L9 6" /></svg>
            <i></i>
            <svg viewBox="0 0 10 8"><path d="M1 2L5 6L9 2" /></svg>
          </div>
        </div>
        <label class="prompt"><span>:</span><input type="text" placeholder="Enter command" /></label>
      </div>
    </div>

    <footer class="status">
      <span class="ready">Ready</span>
      <span class="handle"></span>
      <span class="coords">-4483.92, 1184.29, 0</span>
      <button v-for="x in status" :key="x.t" :class="x.m" :style="{ width: x.w + 'px' }"><span>{{ x.t }}</span></button>
      <div class="tail"><i class="tri"></i><svg viewBox="0 0 10 10"><path d="M8 0H10V2H8ZM8 4H10V6H8ZM8 8H10V10H8ZM4 4H6V6H4ZM4 8H6V10H4ZM0 8H2V10H0Z" fill="#9a9a9a" /></svg></div>
    </footer>
  </div>
</template>

<style>
body { margin: 0; background: #18191b; }
</style>

<style scoped>
.app { display: flex; flex-direction: column; min-height: 100vh; background: #2e3134; color: #e8e9ea; font: 11px/15px "Open Sans", "Noto Sans", sans-serif; overflow: hidden; }
button { background: none; border: 0; padding: 0; margin: 0; color: inherit; font: inherit; display: flex; align-items: center; justify-content: center; }
h1, h2, p, pre { margin: 0; }
i { display: block; flex: none; }

.title { display: flex; align-items: center; height: 23px; background: #fff; color: #111; flex: none; }
.title h1 { font: 400 12px/16px Roboto, "Open Sans", sans-serif; flex: 1; margin-left: 7px; white-space: nowrap; }
.title button { width: 46px; height: 23px; }
.title button svg { width: 12px; height: 12px; }
.title button path { fill: none; stroke: #222; }
.logo { width: 28px; height: 28px; background: #2a7bf0; flex: none; }
.logo svg { width: 100%; height: 100%; }
.logo.small { width: 12px; height: 12px; margin-left: 4px; border-radius: 2px; display: flex; }

.quick { display: flex; align-items: center; height: 29px; flex: none; background: #2d3033; }
.grip { width: 2px; height: 18px; margin: 0 9px 0 6px; flex: none; background: repeating-linear-gradient(#c8cacc 0 2px, transparent 2px 4px); }
.tool { width: 23px; height: 22px; flex: none; }
.tool.active { background: #22456f; outline: 1px dotted #3a7bd0; outline-offset: -1px; }
.ic { width: 18px; height: 18px; flex: none; }
.sep { width: 1px; height: 18px; margin: 0 3px 0 4px; background: #6a6d70; }
.drop { display: flex; align-items: center; height: 22px; background: #404348; min-width: 0; }
.drop select { flex: 1; min-width: 0; appearance: none; background: none; border: 0; padding: 0; margin: 0; color: #f0f0f0; font: 12px/18px "Open Sans", sans-serif; }
.drop .chev { width: 9px; height: 6px; margin-right: 4px; flex: none; }
.chev path { fill: none; stroke: #e8e8e8; stroke-width: 1; }
.swatch { width: 14px; height: 16px; border: 1px solid #111; background: #808285; margin: 0 5px 0 3px; flex: none; }
.quick-layer { width: 300px; margin-left: 3px; }
.quick-set { display: flex; align-items: center; width: 364px; margin-left: 4px; }
.style-drop { width: 147px; padding-left: 3px; }
.space-drop { width: 122px; padding-left: 3px; margin: 0 3px 0 7px; }

.tabs { display: flex; height: 28px; flex: none; background: #18191b; padding-left: 8px; font-size: 13px; }
.tab { width: 80px; height: 28px; color: #eceeef; }
.tab.current { width: 76px; margin-right: 3px; background: #2e3134; }

.ribbon { position: relative; display: flex; height: 93px; flex: none; }
.ribbon > .grip { position: absolute; left: -2px; top: 24px; }
.panel { position: relative; z-index: 1; box-sizing: border-box; flex: none; padding-top: 4px; border-right: 1px solid #43474b; }
.body { display: flex; height: 66px; }
.body.mid { justify-content: center; }
.row { display: flex; height: 22px; }
.cell { width: 24px; height: 22px; flex: none; }
.cell.wide { width: 34px; gap: 1px; justify-content: flex-start; padding-left: 3px; }
.cell.texted { width: auto; gap: 1px; padding-left: 3px; white-space: nowrap; }
.tri { width: 0; height: 0; border: 4px solid transparent; border-top-color: #fff; border-bottom: 0; }
.big { flex-direction: column; justify-content: flex-start; height: 67px; white-space: nowrap; }
.big svg { width: 32px; height: 32px; margin: 2px 0 3px; flex: none; }
.big span { height: 15px; display: flex; align-items: center; gap: 2px; }
.big.hot { background: linear-gradient(#45484d 0 38px, transparent 38px); outline: 1px solid #3d4045; outline-offset: -1px; }
.panel h2 { font-size: 11px; line-height: 23px; font-weight: 700; text-align: center; white-space: nowrap; color: #fff; }
.views { width: 231px; padding-left: 4px; }
.views .drop { width: 200px; }
.views .drop .ic { margin-left: 4px; }
.drop .top-view { padding-left: 7px; }
.selection { width: 72px; }
.layers { width: 282px; padding-left: 1px; }
.layers .big { width: 51px; }
.layers .drop { width: 200px; height: 21px; }
.groups { width: 115px; }
.compare { width: 61px; border-right: 0; }
.tooltip { position: absolute; left: 496px; top: 56px; width: 386px; height: 47px; padding: 1px 4px 0 6px; background: #707173; color: #45474a; z-index: 0; white-space: nowrap; }
.cursor { position: absolute; left: 495px; top: 23px; width: 12px; height: 19px; z-index: 3; }

.work { display: flex; flex: 1; min-height: 0; }
.left { flex: 1; min-width: 0; display: flex; flex-direction: column; }
.docs { display: flex; height: 17px; flex: none; border-bottom: 1px solid #66696c; line-height: 17px; }
.doc { display: flex; justify-content: space-between; box-sizing: border-box; background: #1c1d1f; padding-right: 7px; font-family: Roboto, "Open Sans", sans-serif; }
.doc.d1 { width: 69px; padding-left: 12px; }
.doc.d2 { width: 179px; padding-left: 21px; border-left: 1px solid #2e3134; }
.doc.d3 { width: 189px; padding-left: 13px; background: #2e3134; font-family: "Open Sans", sans-serif; font-weight: 700; color: #fff; }
.doc svg, .plus svg { width: 10px; height: 10px; }
.doc path, .plus path { fill: none; stroke: #d8d8d8; stroke-width: 1.500; }
.plus { width: 28px; background: #1c1d1f; }

.canvas { position: relative; flex: 1; background: #191b1d; border-right: 1px solid #66696c; overflow: hidden; }
.plan { display: block; width: 100%; height: 100%; }
.ucs-text { font: 300 18px "Open Sans", sans-serif; }
.wheel { position: absolute; right: 10px; top: 11px; width: 78px; height: 78px; }

.layouts { display: flex; height: 17px; flex: none; border-bottom: 1px solid #66696c; border-right: 1px solid #66696c; line-height: 17px; }
.nav { width: 15px; height: 16px; margin-right: 2px; background: #1c1d1f; border-left: 1px solid #8a8d90; border-top: 1px solid #8a8d90; box-sizing: border-box; }
.nav svg { width: 12px; height: 12px; }
.nav path { fill: none; stroke: #fff; stroke-width: 1; }
.nav path.fill { fill: #fff; stroke: none; }
.model { width: 42px; font-weight: 700; color: #fff; }
.layout { width: 52px; background: #1c1d1f; }
.add { width: 14px; background: #1c1d1f; margin-left: 3px; font-size: 14px; }

.side { width: 46px; flex: none; display: flex; flex-direction: column; }
.dots { width: 18px; height: 2px; margin: 3px 14px; background: repeating-linear-gradient(90deg, #e0e0e0 0 2px, transparent 2px 4px); }
.side-body { flex: 1; background: #18191b; }
.side-body button { width: 46px; height: 50px; }
.side-body svg { width: 24px; height: 24px; }
.side-body em { font: italic bold 15px/16px "Liberation Serif", serif; color: #fff; }
.side-body b { font-size: 18px; line-height: 16px; }

.command { display: flex; height: 98px; flex: none; margin-right: 46px; position: relative; box-shadow: 46px 0 0 #18191b; }
.cmd-left { width: 8px; padding-top: 6px; flex: none; }
.cmd-left button { width: 8px; height: 8px; font-size: 12px; }
.cmd-left .grip { display: block; margin: 22px 0 0 4px; }
.cmd-main { flex: 1; display: flex; flex-direction: column; min-width: 0; }
.history { display: flex; height: 69px; margin-top: 2px; background: #838383; }
.history pre { flex: 1; padding: 11px 0 0 5px; font: 18px/23px "DejaVu Sans Mono", monospace; color: #fff; }
.bar { width: 16px; background: #f0f0f0; display: flex; flex-direction: column; align-items: center; justify-content: space-between; }
.bar svg { width: 10px; height: 8px; margin: 5px 0; }
.bar path { fill: none; stroke: #555; stroke-width: 2; }
.bar i { width: 16px; height: 17px; background: #cdcdcd; margin-top: 17px; }
.prompt { display: flex; align-items: center; box-sizing: border-box; height: 27px; padding-bottom: 2px; background: #323638; font: 18px/25px "DejaVu Sans Mono", monospace; color: #fff; }
.prompt span { width: 23px; }
.prompt input { flex: 1; background: none; border: 0; padding: 0; outline: 0; font: italic 18px/25px "DejaVu Sans Mono", monospace; color: #fff; }
.prompt input::placeholder { color: #aeb0b1; opacity: 1; }

.status { display: flex; align-items: center; height: 20px; flex: none; background: #18191b; white-space: nowrap; }
.ready { width: 441px; padding-left: 2px; box-sizing: border-box; }
.handle { width: 48px; height: 2px; background: #55585a; align-self: flex-end; }
.coords { margin-left: auto; padding-right: 5px; }
.status .coords { border-right: 1px solid #c8c8c8; }
.status button { box-sizing: border-box; border-right: 1px solid #c8c8c8; height: 16px; color: #f0f0f0; overflow: hidden; }
.status button.off { color: #6c6e70; }
.status button.on span { background: #484b50; }
.tail { width: 60px; display: flex; align-items: center; justify-content: space-between; padding-left: 4px; box-sizing: border-box; align-self: stretch; }
.tail svg { width: 10px; height: 10px; align-self: flex-end; }
</style>
